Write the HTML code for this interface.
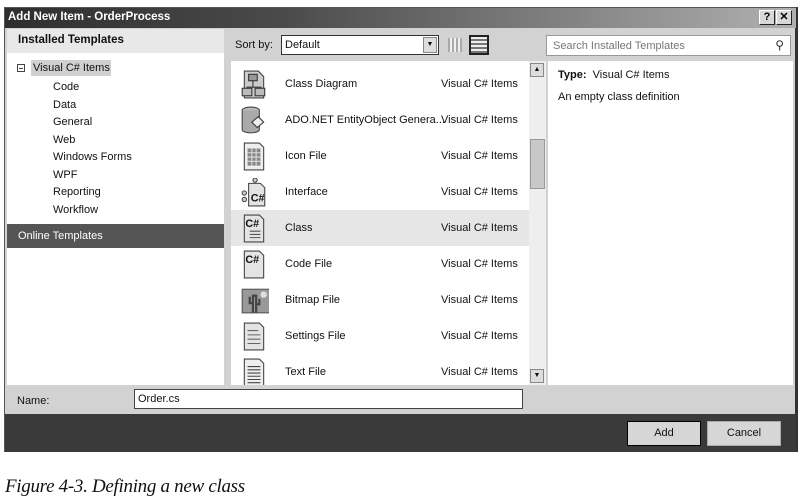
<!DOCTYPE html>
<html><head><meta charset="utf-8"><style>
*{margin:0;padding:0;box-sizing:border-box}
body{width:807px;height:504px;background:#fff;position:relative;overflow:hidden;font-family:"Liberation Sans",sans-serif;font-size:11px;color:#111}
.a{position:absolute}
.dlg{left:4px;top:7px;width:794px;height:445px;background:#d2d2d2;border:1px solid #555;border-right:3px solid #333}
.title{left:0;top:0;width:791px;height:20px;background:linear-gradient(to right,#2e2e2e,#4a4a4a 35%,#b0b0b0);color:#fff;font-weight:bold;font-size:11.5px;padding:3px 0 0 3px}
.tb{top:2px;width:16px;height:15px;background:#d8d8d8;border:1px solid #fff;border-right-color:#222;border-bottom-color:#222;color:#000;font-weight:bold;font-size:11px;text-align:center;line-height:13px}
.row{left:0;width:298px;height:36px}
.row .n{position:absolute;left:54px;top:12px}
.row .t{position:absolute;left:210px;top:12px}
.ic{position:absolute;left:10px;top:4px;width:26px;height:29px}
</style></head><body>
<div class="a dlg">
 <div class="a title">Add New Item - OrderProcess</div>
 <div class="a tb" style="left:754px">?</div>
 <div class="a tb" style="left:771px">✕</div>
 <div class="a" style="left:2px;top:21px;width:217px;height:356px;background:#fff"></div>
 <div class="a" style="left:2px;top:21px;width:217px;height:24px;background:#e8e8e8;font-weight:bold;font-size:11.5px;padding:5px 0 0 11px">Installed Templates</div>
 <div class="a" style="left:12px;top:56px;width:8px;height:8px;border:1px solid #444"></div>
 <div class="a" style="left:14px;top:60px;width:4px;height:1px;background:#444"></div>
 <div class="a" style="left:26px;top:52px;width:80px;height:16px;background:#d0d0d0;padding:2px 0 0 2px">Visual C# Items</div>
 <div class="a" style="left:48px;top:71px;line-height:17.5px">Code<br>Data<br>General<br>Web<br>Windows Forms<br>WPF<br>Reporting<br>Workflow</div>
 <div class="a" style="left:2px;top:216px;width:217px;height:24px;background:#555;color:#fff;padding:6px 0 0 11px">Online Templates</div>
 <div class="a" style="left:230px;top:31px">Sort by:</div>
 <div class="a" style="left:276px;top:27px;width:158px;height:20px;background:#fff;border:1px solid #333;padding:3px 0 0 3px">Default</div>
 <div class="a" style="left:418px;top:29px;width:14px;height:16px;background:#ddd;border:1px solid #888;font-size:7px;text-align:center;line-height:14px">▼</div>
 <div class="a" style="left:443px;top:30px;width:14px;height:14px;background:repeating-linear-gradient(90deg,#999 0 2px,transparent 2px 4px),#fff;opacity:.7"></div>
 <div class="a" style="left:464px;top:27px;width:20px;height:20px;border:2px solid #222;background:repeating-linear-gradient(0deg,#777 0 2px,#eee 2px 4px)"></div>
 <div class="a" style="left:541px;top:27px;width:245px;height:21px;background:#fff;border:1px solid #999;color:#777;padding:4px 0 0 6px">Search Installed Templates<span style="position:absolute;right:6px;top:2px;color:#333;font-size:12px">⚲</span></div>
 <div class="a" style="left:226px;top:53px;width:298px;height:324px;background:#fff;overflow:hidden">
  <div class="a row" style="top:5px"><svg class="ic" viewBox="0 0 24 27"><path d="M3 1h13l5 5v20H3z" fill="#ccc" stroke="#444"/><rect x="7" y="4" width="8" height="6" fill="#999" stroke="#333"/><path d="M11 10v6M5 16h14" stroke="#333"/><rect x="1" y="17" width="9" height="7" fill="#bbb" stroke="#333"/><rect x="13" y="17" width="9" height="7" fill="#bbb" stroke="#333"/></svg><span class="n">Class Diagram</span><span class="t">Visual C# Items</span></div>
  <div class="a row" style="top:41px"><svg class="ic" viewBox="0 0 24 27"><ellipse cx="9" cy="4" rx="8" ry="3" fill="#bbb" stroke="#444"/><path d="M1 4v18a8 3 0 0 0 16 0V4" fill="#aaa" stroke="#444"/><path d="M10 15l6-5 5 5-6 5z" fill="#eee" stroke="#333"/></svg><span class="n">ADO.NET EntityObject Genera...</span><span class="t">Visual C# Items</span></div>
  <div class="a row" style="top:77px"><svg class="ic" viewBox="0 0 24 27"><path d="M3 1h14l4 4v21H3z" fill="#eee" stroke="#444"/><path d="M6 6h12v16H6z" fill="#888"/><path d="M6 10h12M6 14h12M6 18h12M10 6v16M14 6v16" stroke="#ddd"/></svg><span class="n">Icon File</span><span class="t">Visual C# Items</span></div>
  <div class="a row" style="top:113px"><svg class="ic" viewBox="0 0 24 27"><path d="M7 5h11l4 4v17H7z" fill="#e4e4e4" stroke="#444"/><circle cx="13" cy="2" r="2" fill="#ccc" stroke="#444"/><circle cx="3" cy="14" r="2" fill="#ccc" stroke="#444"/><circle cx="3" cy="20" r="2" fill="#ccc" stroke="#444"/><text x="9" y="22" font-size="10" font-weight="bold" font-family="Liberation Sans" fill="#111">C#</text></svg><span class="n">Interface</span><span class="t">Visual C# Items</span></div>
  <div class="a row" style="top:149px;background:#e6e6e6"><svg class="ic" viewBox="0 0 24 27"><path d="M3 1h14l4 4v21H3z" fill="#e4e4e4" stroke="#444"/><text x="4" y="12" font-size="10" font-weight="bold" font-family="Liberation Sans" fill="#111">C#</text><path d="M8 16h10M8 19h10M8 22h10" stroke="#555"/></svg><span class="n">Class</span><span class="t">Visual C# Items</span></div>
  <div class="a row" style="top:185px"><svg class="ic" viewBox="0 0 24 27"><path d="M3 1h14l4 4v21H3z" fill="#e4e4e4" stroke="#444"/><text x="4" y="12" font-size="10" font-weight="bold" font-family="Liberation Sans" fill="#111">C#</text></svg><span class="n">Code File</span><span class="t">Visual C# Items</span></div>
  <div class="a row" style="top:221px"><svg class="ic" viewBox="0 0 24 27" style="left:8px;width:30px"><rect x="1" y="3" width="26" height="22" fill="#999" stroke="#555"/><circle cx="21" cy="8" r="3" fill="#ddd"/><path d="M11 25V9h3v16M8 10v6h3M17 12v5h-3" stroke="#444" stroke-width="2" fill="none"/></svg><span class="n">Bitmap File</span><span class="t">Visual C# Items</span></div>
  <div class="a row" style="top:257px"><svg class="ic" viewBox="0 0 24 27"><path d="M3 1h14l4 4v21H3z" fill="#e4e4e4" stroke="#444"/><path d="M6 8h10M6 12h12M6 16h12M6 20h12" stroke="#666"/></svg><span class="n">Settings File</span><span class="t">Visual C# Items</span></div>
  <div class="a row" style="top:293px"><svg class="ic" viewBox="0 0 24 27"><path d="M3 1h14l4 4v21H3z" fill="#eee" stroke="#444"/><path d="M6 8h12M6 11h12M6 14h12M6 17h12M6 20h12M6 23h12" stroke="#444"/></svg><span class="n">Text File</span><span class="t">Visual C# Items</span></div>
 </div>
 <div class="a" style="left:524px;top:53px;width:17px;height:324px;background:#eee"></div>
 <div class="a" style="left:525px;top:55px;width:14px;height:14px;background:#ddd;border:1px solid #888;font-size:7px;text-align:center;line-height:12px">▲</div>
 <div class="a" style="left:525px;top:131px;width:15px;height:50px;background:#c8c8c8;border:1px solid #999"></div>
 <div class="a" style="left:525px;top:361px;width:14px;height:14px;background:#ddd;border:1px solid #888;font-size:7px;text-align:center;line-height:12px">▼</div>
 <div class="a" style="left:543px;top:53px;width:245px;height:324px;background:#fff"></div>
 <div class="a" style="left:553px;top:61px"><b>Type:</b>&nbsp; Visual C# Items</div>
 <div class="a" style="left:553px;top:83px">An empty class definition</div>
 <div class="a" style="left:12px;top:387px">Name:</div>
 <div class="a" style="left:129px;top:381px;width:389px;height:20px;background:#fff;border:1px solid #444;padding:3px 0 0 3px">Order.cs</div>
 <div class="a" style="left:0;top:406px;width:791px;height:38px;background:#3a3a3a"></div>
 <div class="a" style="left:622px;top:413px;width:74px;height:25px;background:#d6d6d6;border:1px solid #000;text-align:center;line-height:23px">Add</div>
 <div class="a" style="left:702px;top:413px;width:74px;height:25px;background:#d6d6d6;border:1px solid #aaa;text-align:center;line-height:23px">Cancel</div>
</div>
<div class="a" style="left:5px;top:476px;font-family:'Liberation Serif',serif;font-style:italic;font-size:19px;letter-spacing:-0.3px;color:#111">Figure 4-3. Defining a new class</div>
</body></html>
